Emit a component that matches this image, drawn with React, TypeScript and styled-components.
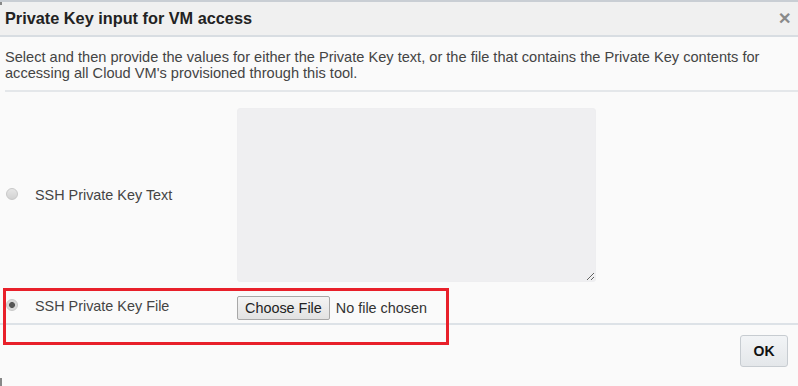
import styled, { createGlobalStyle } from "styled-components";

const GlobalStyle = createGlobalStyle`
  html, body {
    margin: 0;
    padding: 0;
    background: #fafafa;
  }
  body {
    font-family: "Liberation Sans", Arial, sans-serif;
    color: #333;
  }
`;

const Dialog = styled.div`
  position: relative;
  width: 798px;
  height: 386px;
  background: #fafafa;
  border-top: 2px solid #c9ced4;
  box-sizing: border-box;
  display: flex;
  flex-direction: column;
  overflow: hidden;
`;

const Header = styled.div`
  height: 33px;
  display: flex;
  align-items: center;
  justify-content: space-between;
  padding: 0 7px 0 5px;
  background: #f0f0f0;
  border-bottom: 2px solid #d8dde2;
`;

const Title = styled.h1`
  margin: 0;
  font-size: 16.3px;
  font-weight: bold;
  color: #222;
`;

const Close = styled.span`
  font-size: 16px;
  font-weight: bold;
  color: #8a8a8a;
  line-height: 1;
`;

const Body = styled.div`
  padding: 0 0 0 5px;
  display: flex;
  flex-direction: column;
`;

const Intro = styled.p`
  margin: 0;
  padding: 12px 0 9px;
  font-size: 14.6px;
  line-height: 16px;
  color: #444;
  border-bottom: 2px solid #e4e7ea;
`;

const Option = styled.div<{ pad: string }>`
  display: flex;
  align-items: center;
  padding: ${(p) => p.pad};
`;

const OptionLabel = styled.label<{ lift?: number }>`
  width: 232px;
  display: flex;
  align-items: center;
  gap: 17px;
  font-size: 14.4px;
  color: #444;
  margin-bottom: ${(p) => p.lift ?? 0}px;
`;

const Radio = styled.span<{ checked?: boolean }>`
  width: 12px;
  height: 12px;
  border-radius: 50%;
  border: 1px solid #c8c8c8;
  background: ${(p) =>
    p.checked
      ? "radial-gradient(circle, #555 0 2.6px, #d4d4d4 3.3px, #e6e6e6 100%)"
      : "linear-gradient(#e6e6e6, #d2d2d2)"};
  box-sizing: border-box;
  flex: none;
  margin: 0 0 3px 1px;
`;

const KeyText = styled.textarea`
  width: 359px;
  height: 174px;
  margin: 0;
  border: 1px solid #eeeef0;
  border-radius: 3px;
  background: #efeff1;
  resize: both;
  box-sizing: border-box;
  outline: none;
`;

const FileRow = styled.div`
  display: flex;
  align-items: center;
  gap: 6px;
  font-size: 14.4px;
  color: #333;
`;

const ChooseButton = styled.button`
  height: 24px;
  padding: 0 7px;
  font-family: inherit;
  font-size: 14.4px;
  color: #222;
  background: linear-gradient(#f4f4f4, #e2e2e2);
  border: 1px solid #a8a8a8;
  border-radius: 2px;
`;

const Footer = styled.div`
  border-top: 2px solid #dde2e7;
  display: flex;
  justify-content: flex-end;
  padding: 10px 10px 0 0;
`;

const OkButton = styled.button`
  width: 48px;
  height: 32px;
  font-family: inherit;
  font-size: 14px;
  font-weight: bold;
  color: #111;
  background: linear-gradient(#f2f4f6, #e4e7ea);
  border: 1px solid #c7ccd1;
  border-radius: 3px;
`;

const Highlight = styled.div`
  position: absolute;
  left: 3px;
  top: 286px;
  width: 446px;
  height: 57px;
  border: 3px solid #e8202a;
  box-sizing: border-box;
  pointer-events: none;
`;

const EdgeMark = styled.div<{ top: number; h: number }>`
  position: absolute;
  left: 0;
  top: ${(p) => p.top}px;
  width: 2px;
  height: ${(p) => p.h}px;
  background: #888;
`;

export default function App() {
  return (
    <>
      <GlobalStyle />
      <Dialog>
        <Header>
          <Title>Private Key input for VM access</Title>
          <Close>✕</Close>
        </Header>
        <Body>
          <Intro>
            Select and then provide the values for either the Private Key text,
            or the file that contains the Private Key contents for
            <br />
            accessing all Cloud VM's provisioned through this tool.
          </Intro>
          <Option pad="16px 0 0">
            <OptionLabel>
              <Radio />
              SSH Private Key Text
            </OptionLabel>
            <KeyText />
          </Option>
          <Option pad="14px 0 3px">
            <OptionLabel lift={4}>
              <Radio checked />
              SSH Private Key File
            </OptionLabel>
            <FileRow>
              <ChooseButton>Choose File</ChooseButton>
              No file chosen
            </FileRow>
          </Option>
        </Body>
        <Footer>
          <OkButton>OK</OkButton>
        </Footer>
        <Highlight />
        <EdgeMark top={-2} h={5} />
        <EdgeMark top={376} h={10} />
      </Dialog>
    </>
  );
}
